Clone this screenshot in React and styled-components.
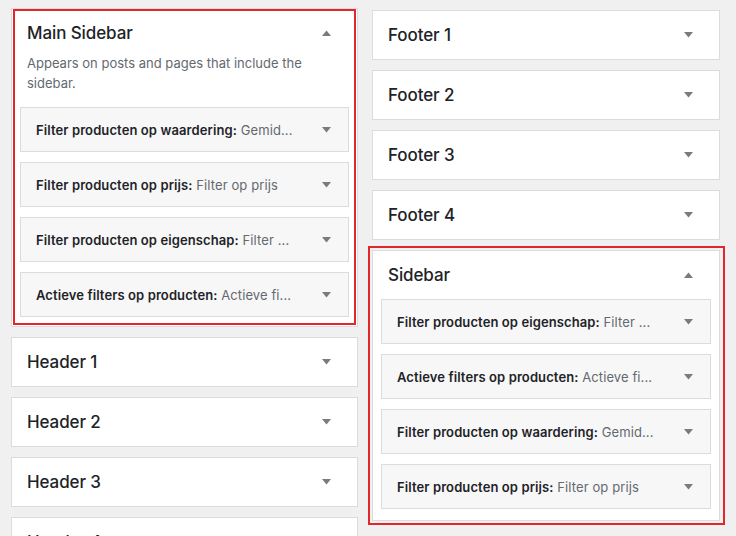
import React from "react";
import styled, { createGlobalStyle, css } from "styled-components";

const GlobalStyle = createGlobalStyle`
  html, body {
    margin: 0;
    padding: 0;
    background: #f0f0f1;
    font-family: Inter, "Noto Sans", "Liberation Sans", sans-serif;
    color: #1d2327;
    -webkit-font-smoothing: antialiased;
  }
`;

const Page = styled.div`
  display: grid;
  grid-template-columns: 347px 348px;
  column-gap: 14px;
  align-items: start;
  padding-left: 11px;
  height: 536px;
  overflow: hidden;
`;

const Column = styled.div`
  display: flex;
  flex-direction: column;
  gap: 10px;
  margin-top: ${(p) => p.$top}px;
`;

const highlightFrames = {
  inner: css`
    top: 0;
    left: 1px;
    right: 1px;
    bottom: 1px;
  `,
  outer: css`
    top: -5px;
    left: -5px;
    right: -6px;
    bottom: -5px;
  `,
};

const Area = styled.section`
  position: relative;
  background: #fff;
  border: 1px solid #dcdcde;
  box-sizing: border-box;

  ${(p) =>
    p.$highlight &&
    css`
      &::after {
        content: "";
        position: absolute;
        ${highlightFrames[p.$highlight]}
        border: 2px solid #e3262b;
        pointer-events: none;
      }
    `}
`;

const AreaHeader = styled.div`
  height: 48px;
  display: flex;
  align-items: center;
  justify-content: space-between;
  padding: 0 26px 0 15px;
`;

const AreaTitle = styled.h2`
  margin: 0;
  font-size: 17px;
  font-weight: 500;
  letter-spacing: -0.1px;
  color: #1d2327;
`;

const Description = styled.p`
  margin: -3px 15px 14px;
  font-size: 13px;
  line-height: 19.5px;
  color: #646970;
`;

const WidgetList = styled.div`
  display: flex;
  flex-direction: column;
  gap: 10px;
  padding: 0 8px ${(p) => p.$bottom}px;
`;

const Widget = styled.div`
  height: 45px;
  box-sizing: border-box;
  display: flex;
  align-items: center;
  justify-content: space-between;
  padding: 0 17px 0 15px;
  background: #f7f7f7;
  border: 1px solid #dcdcde;
  font-size: 13px;
  letter-spacing: 0.1px;
  white-space: nowrap;
`;

const WidgetName = styled.span`
  font-weight: 600;
  color: #1d2327;
`;

const WidgetLabel = styled.span`
  font-weight: 400;
  color: #646970;
`;

const Toggle = ({ open }) => (
  <svg width="9" height="6" viewBox="0 0 9 6" aria-hidden="true">
    <path
      d={open ? "M0 6 L4.5 0.5 L9 6 Z" : "M0 0 L9 0 L4.5 5.5 Z"}
      fill="#787c82"
    />
  </svg>
);

const WidgetRow = ({ name, label }) => (
  <Widget>
    <span>
      <WidgetName>{name}:</WidgetName> <WidgetLabel>{label}</WidgetLabel>
    </span>
    <Toggle />
  </Widget>
);

const WidgetArea = ({ title, description, widgets, highlight }) => {
  const open = Boolean(widgets);
  return (
    <Area $highlight={highlight}>
      <AreaHeader>
        <AreaTitle>{title}</AreaTitle>
        <Toggle open={open} />
      </AreaHeader>
      {description && <Description>{description}</Description>}
      {open && (
        <WidgetList $bottom={description ? 9 : 11}>
          {widgets.map((w, i) => (
            <WidgetRow key={i} name={w.name} label={w.label} />
          ))}
        </WidgetList>
      )}
    </Area>
  );
};

const rating = { name: "Filter producten op waardering", label: "Gemid..." };
const price = { name: "Filter producten op prijs", label: "Filter op prijs" };
const attribute = { name: "Filter producten op eigenschap", label: "Filter ..." };
const active = { name: "Actieve filters op producten", label: "Actieve fi..." };

export default function App() {
  return (
    <>
      <GlobalStyle />
      <Page>
        <Column $top={8}>
          <WidgetArea
            title="Main Sidebar"
            description="Appears on posts and pages that include the sidebar."
            widgets={[rating, price, attribute, active]}
            highlight="inner"
          />
          <WidgetArea title="Header 1" />
          <WidgetArea title="Header 2" />
          <WidgetArea title="Header 3" />
          <WidgetArea title="Header 4" />
        </Column>
        <Column $top={10}>
          <WidgetArea title="Footer 1" />
          <WidgetArea title="Footer 2" />
          <WidgetArea title="Footer 3" />
          <WidgetArea title="Footer 4" />
          <WidgetArea
            title="Sidebar"
            widgets={[attribute, active, rating, price]}
            highlight="outer"
          />
        </Column>
      </Page>
    </>
  );
}
